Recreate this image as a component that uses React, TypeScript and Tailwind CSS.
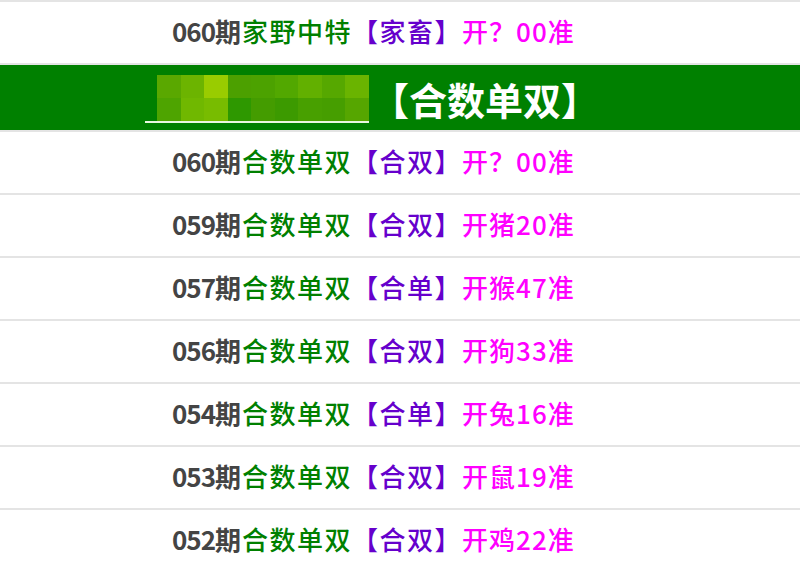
const rows = [
  { no: "060", tag: "合双", open: "开？00准" },
  { no: "059", tag: "合双", open: "开猪20准" },
  { no: "057", tag: "合单", open: "开猴47准" },
  { no: "056", tag: "合双", open: "开狗33准" },
  { no: "054", tag: "合单", open: "开兔16准" },
  { no: "053", tag: "合双", open: "开鼠19准" },
  { no: "052", tag: "合双", open: "开鸡22准" },
];

const mosaicTop = ["#5aa800", "#6cb400", "#99cc00", "#4ca000", "#4ca200", "#52a800", "#62b000", "#56a800", "#6ab400"];
const mosaicBottom = ["#4ea400", "#70b800", "#78bc00", "#2e9800", "#449c00", "#3c9a00", "#48a000", "#469e00", "#56a600"];

const font = { fontFamily: '"Noto Sans CJK SC", "Noto Sans", sans-serif' };

function Row({ no, name, tag, open }: { no: string; name: string; tag: string; open: string }) {
  return (
    <div className="flex h-[63px] items-center border-b-2 border-[#e4e4e4] pb-[4px] pl-[172px] text-[26px] leading-none">
      <span className="font-bold tracking-[-1px] text-[#444444]">{no}期</span>
      <span className="ml-[2px] font-medium tracking-[1.5px] text-[#008000]">{name}</span>
      <span className="font-medium tracking-[1.5px] text-[#6600cc]">【{tag}】</span>
      <span className="font-medium tracking-[1px] text-[#ff00ff]">{open}</span>
    </div>
  );
}

export default function App() {
  return (
    <div className="h-[562px] w-[800px] overflow-hidden bg-white" style={font}>
      <div className="border-t-2 border-[#e4e4e4]">
        <Row no="060" name="家野中特" tag="家畜" open="开？00准" />
      </div>

      <div className="flex h-[67px] items-center border-b-2 border-[#e4e4e4] bg-[#008000] pt-[2px]">
        <div className="ml-[145px] flex h-[49px] w-[224px] flex-col justify-end border-b-2 border-[#e8f8e0]">
          <div className="ml-[12px] flex">
            {mosaicTop.map((c, i) => (
              <div key={i} className="h-[23px] w-[23.5px]" style={{ backgroundColor: c }} />
            ))}
          </div>
          <div className="ml-[12px] flex">
            {mosaicBottom.map((c, i) => (
              <div key={i} className="h-[23px] w-[23.5px]" style={{ backgroundColor: c }} />
            ))}
          </div>
        </div>
        <span className="ml-[2px] text-[38px] font-bold leading-none text-white">【合数单双】</span>
      </div>

      {rows.map((r, i) => (
        <Row key={i} no={r.no} name="合数单双" tag={r.tag} open={r.open} />
      ))}
    </div>
  );
}
